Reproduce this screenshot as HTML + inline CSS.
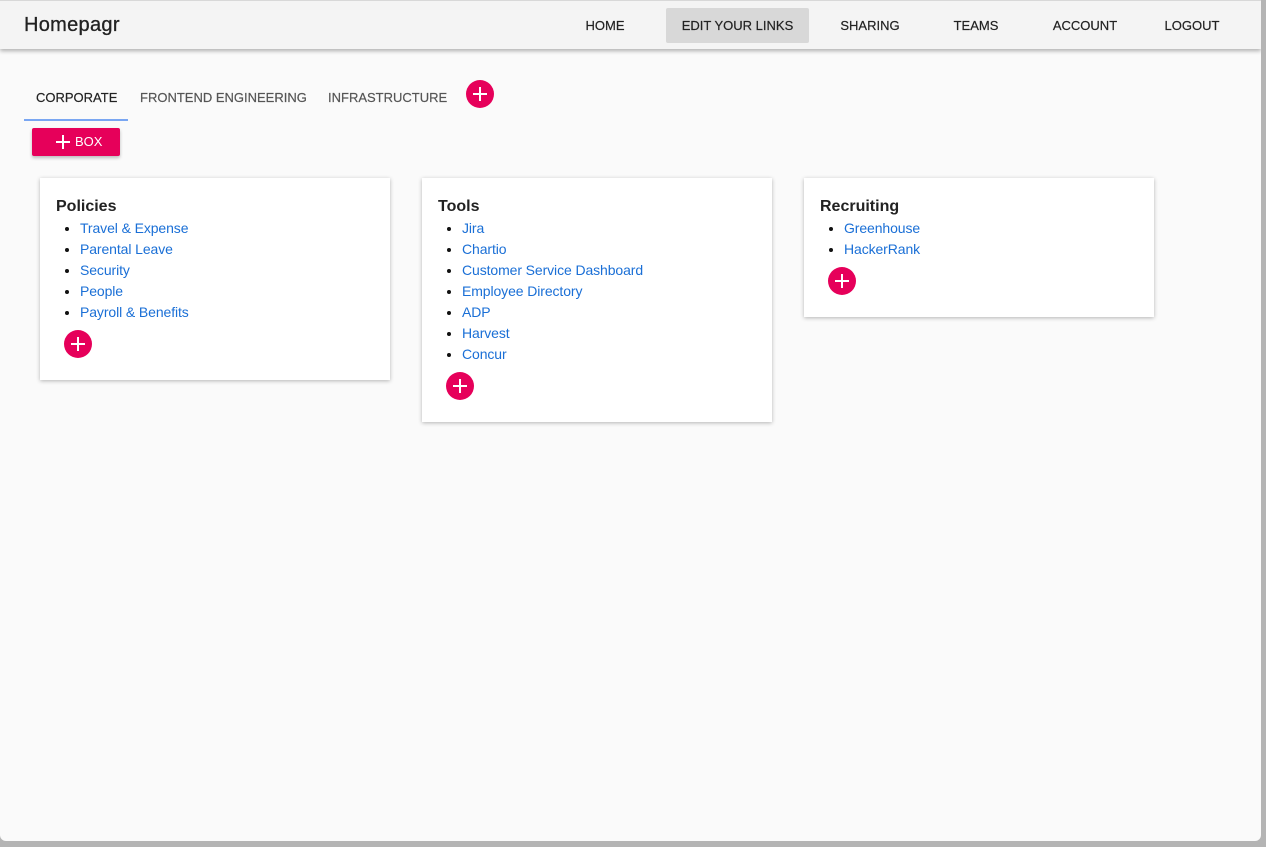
<!DOCTYPE html>
<html><head><style>
*{margin:0;padding:0;box-sizing:border-box}
body{width:1266px;height:847px;background:#b4b4b4;font-family:"Liberation Sans",sans-serif;position:relative;overflow:hidden}
#win{position:absolute;left:0;top:0;width:1261px;height:841px;background:#fafafa;border-radius:0 0 6px 6px;overflow:hidden;border-top:1px solid #d8d8d8}
#hdr{position:absolute;left:0;top:0;width:1261px;height:48px;background:#f4f4f4;box-shadow:0 2px 4px rgba(0,0,0,.3)}
#logo{position:absolute;left:24px;top:13px;font-size:20px;color:#222;letter-spacing:.3px;-webkit-text-stroke:.3px #222}
.nav{position:absolute;top:7px;height:35px;line-height:35px;font-size:13px;color:#222;text-align:center;border-radius:2px;-webkit-text-stroke:.2px #222}
.tab{position:absolute;top:89px;font-size:13px;color:#555;-webkit-text-stroke:.2px #555}
.fab{position:absolute;width:28px;height:28px;border-radius:50%;background:#e6005a;color:#fff}
.fab:before,.fab:after{content:"";position:absolute;background:#fff;left:7px;top:13px;width:14px;height:2px}
.fab:after{left:13px;top:7px;width:2px;height:14px}
.card{position:absolute;background:#fff;box-shadow:0 1px 4px rgba(0,0,0,.28);top:177px;width:350px}
.card h3{position:absolute;left:16px;top:20px;font-size:16px;color:#222}
.card ul{position:absolute;left:40px;top:40px;list-style:disc;font-size:14px;line-height:21px;color:#111;letter-spacing:-.1px}
.card li a{color:#1a6fd6}
</style></head><body>
<div id="win">
<div id="hdr">
<div id="logo">Homepagr</div>
<div class="nav" style="left:570px;width:70px">HOME</div>
<div class="nav" style="left:666px;width:143px;background:#d8d8d8">EDIT YOUR LINKS</div>
<div class="nav" style="left:830px;width:80px">SHARING</div>
<div class="nav" style="left:941px;width:70px">TEAMS</div>
<div class="nav" style="left:1040px;width:90px">ACCOUNT</div>
<div class="nav" style="left:1152px;width:80px">LOGOUT</div>
</div>
<div class="tab" style="left:36px;color:#222;-webkit-text-stroke:.2px #222">CORPORATE</div>
<div style="position:absolute;left:24px;top:118px;width:104px;height:2px;background:#79a6f2"></div>
<div class="tab" style="left:140px">FRONTEND ENGINEERING</div>
<div class="tab" style="left:328px">INFRASTRUCTURE</div>
<div class="fab" style="left:466px;top:79px"></div>
<div style="position:absolute;left:32px;top:127px;width:88px;height:28px;background:#e6005a;border-radius:2px;box-shadow:0 2px 3px rgba(0,0,0,.25);color:#fff;font-size:13px;line-height:28px">
<span style="position:absolute;left:24px;top:13px;width:14px;height:2px;background:#fff"></span>
<span style="position:absolute;left:30px;top:7px;width:2px;height:14px;background:#fff"></span>
<span style="position:absolute;left:43px">BOX</span></div>

<div class="card" style="left:40px;height:202px"><h3>Policies</h3>
<ul><li><a>Travel &amp; Expense</a></li><li><a>Parental Leave</a></li><li><a>Security</a></li><li><a>People</a></li><li><a>Payroll &amp; Benefits</a></li></ul>
<div class="fab" style="left:24px;top:152px"></div></div>

<div class="card" style="left:422px;height:244px"><h3>Tools</h3>
<ul><li><a>Jira</a></li><li><a>Chartio</a></li><li><a>Customer Service Dashboard</a></li><li><a>Employee Directory</a></li><li><a>ADP</a></li><li><a>Harvest</a></li><li><a>Concur</a></li></ul>
<div class="fab" style="left:24px;top:194px"></div></div>

<div class="card" style="left:804px;height:139px"><h3>Recruiting</h3>
<ul><li><a>Greenhouse</a></li><li><a>HackerRank</a></li></ul>
<div class="fab" style="left:24px;top:89px"></div></div>
</div>
</body></html>
